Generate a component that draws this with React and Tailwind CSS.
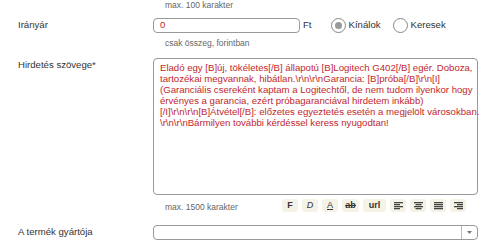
import React from "react";

const lines = [
  "Eladó egy [B]új, tökéletes[/B] állapotú [B]Logitech G402[/B] egér. Doboza,",
  "tartozékai megvannak, hibátlan.\\r\\n\\r\\nGarancia: [B]próba[/B]\\r\\n[I]",
  "(Garanciális csereként kaptam a Logitechtől, de nem tudom ilyenkor hogy",
  "érvényes a garancia, ezért próbagaranciával hirdetem inkább)",
  "[/I]\\r\\n\\r\\n[B]Átvétel[/B]: előzetes egyeztetés esetén a megjelölt városokban.",
  "\\r\\n\\r\\nBármilyen további kérdéssel keress nyugodtan!",
];

function AlignIcon({ type }) {
  const rows = {
    left: [[0, 9], [0, 6], [0, 9], [0, 6]],
    center: [[0, 9], [1.5, 6], [0, 9], [1.5, 6]],
    justify: [[0, 9], [0, 9], [0, 9], [0, 9]],
    right: [[0, 9], [3, 6], [0, 9], [3, 6]],
  }[type];
  return (
    <svg width="9" height="8" viewBox="0 0 9 8">
      {rows.map(([x, w], i) => (
        <rect key={i} x={x} y={i * 2} width={w} height="1.3" fill="#444" />
      ))}
    </svg>
  );
}

function Btn({ children, w = "w-[16px]" }) {
  return (
    <div className={`${w} h-[13px] rounded-[3px] bg-[#f5f2e6] flex items-center justify-center text-[9px] leading-none text-[#333]`}>
      {children}
    </div>
  );
}

export default function App() {
  return (
    <div className="w-[500px] h-[250px] bg-white overflow-hidden font-['Liberation_Sans',Arial,sans-serif] text-[#333]">
      <div className="pl-[165px] h-[10px] text-[8.5px] leading-[10px] text-[#666]">max. 100 karakter</div>

      <div className="mt-[8px] flex items-center h-[15px]">
        <div className="w-[153px] pl-[18px] text-[9.6px]">Irányár</div>
        <div className="w-[147px] h-[15px] border border-[#999] rounded-[4px] flex items-center pl-[6px] text-[9.6px] text-[#c0282d]">0</div>
        <div className="ml-[3px] text-[9.6px]">Ft</div>
        <div className="ml-[19px] w-[15px] h-[15px] rounded-full border border-[#888] flex items-center justify-center">
          <div className="w-[7px] h-[7px] rounded-full bg-[#999]"></div>
        </div>
        <div className="ml-[3px] text-[9.6px]">Kínálok</div>
        <div className="ml-[12px] w-[15px] h-[15px] rounded-full border border-[#888]"></div>
        <div className="ml-[3px] text-[9.6px]">Keresek</div>
      </div>

      <div className="mt-[5px] pl-[165px] h-[10px] text-[8.5px] leading-[10px] text-[#666]">csak összeg, forintban</div>

      <div className="mt-[10px] flex">
        <div className="w-[153px] pl-[18px] pt-[1px] text-[9.6px] leading-[12px]">Hirdetés szövege*</div>
        <div className="w-[325px] h-[137px] border border-[#999] rounded-[4px] pl-[6px] pt-[3px] text-[9.6px] leading-[11px] text-[#c0282d]">
          {lines.map((l, i) => (
            <div key={i} className="whitespace-nowrap">{l}</div>
          ))}
        </div>
      </div>

      <div className="mt-[4px] flex items-center h-[13px]">
        <div className="pl-[165px] w-[282px] text-[8.5px] text-[#666] pt-[4px]">max. 1500 karakter</div>
        <div className="flex gap-[4px]">
          <Btn><span className="font-bold">F</span></Btn>
          <Btn><span className="italic">D</span></Btn>
          <Btn><span className="underline">A</span></Btn>
          <Btn w="w-[17px]"><span className="line-through font-bold">ab</span></Btn>
          <Btn w="w-[23px]"><span className="font-bold">url</span></Btn>
          <Btn><AlignIcon type="left" /></Btn>
          <Btn><AlignIcon type="center" /></Btn>
          <Btn><AlignIcon type="justify" /></Btn>
          <Btn><AlignIcon type="right" /></Btn>
        </div>
      </div>

      <div className="mt-[13px] flex items-center h-[15px]">
        <div className="w-[153px] pl-[18px] text-[9.6px]">A termék gyártója</div>
        <div className="w-[325px] h-[15px] border border-[#999] rounded-[4px] flex justify-end">
          <div className="w-[16px] h-full border-l border-[#bbb] flex items-center justify-center">
            <svg width="5" height="3" viewBox="0 0 5 3"><path d="M0 0 L5 0 L2.5 3 Z" fill="#777" /></svg>
          </div>
        </div>
      </div>
    </div>
  );
}
